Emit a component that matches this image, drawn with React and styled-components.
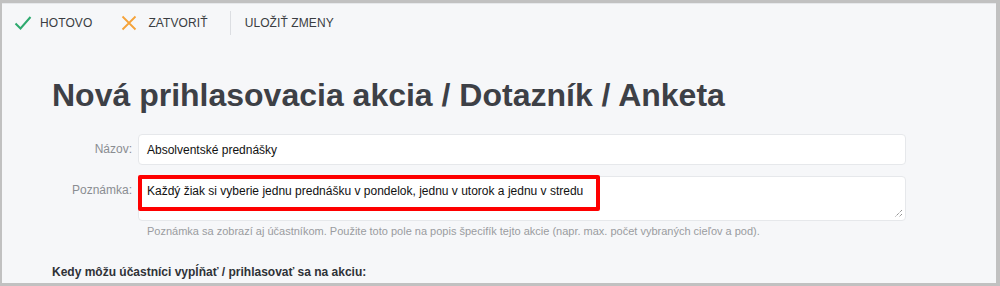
import React from "react";
import styled, { createGlobalStyle } from "styled-components";

const GlobalStyle = createGlobalStyle`
  html, body {
    margin: 0;
    padding: 0;
    background: #c1c1c1;
  }
  * {
    box-sizing: border-box;
  }
`;

const Frame = styled.div`
  width: 1000px;
  height: 286px;
  border-style: solid;
  border-color: #c1c1c1;
  border-width: 3px 4px 3px 2px;
  background: #f6f7f9;
  overflow: hidden;
  font-family: "Liberation Sans", Arial, sans-serif;
`;

const Toolbar = styled.div`
  display: flex;
  align-items: center;
  height: 38px;
  padding: 0 12px;
  border-top: 1px solid #e6e8eb;
`;

const ToolButton = styled.div`
  display: flex;
  align-items: center;
  gap: ${(p) => p.iconGap || "0"};
  margin-right: ${(p) => p.gap || "0"};
  font-size: 12px;
  color: #3a3d42;
  letter-spacing: 0.1px;
`;

const Divider = styled.div`
  width: 1px;
  height: 24px;
  background: #dcdee2;
  margin: 0 14px 0 0;
`;

const Content = styled.div`
  padding: 34px 0 0 50px;
`;

const Title = styled.h1`
  margin: 0 0 19px 0;
  font-size: 32px;
  font-weight: 700;
  color: #3d4046;
  line-height: 40px;
`;

const FormRow = styled.div`
  display: grid;
  grid-template-columns: 80px 768px;
  column-gap: 6px;
  margin-bottom: ${(p) => p.mb || "11px"};
`;

const Label = styled.label`
  text-align: right;
  font-size: 12px;
  color: #8a8d92;
  padding-top: ${(p) => p.pt || "8px"};
`;

const Field = styled.div`
  position: relative;
`;

const TextInput = styled.div`
  height: 31px;
  background: #fff;
  border: 1px solid #e6e8eb;
  border-radius: 4px;
  padding: 0 8px;
  display: flex;
  align-items: center;
  font-size: 12px;
  color: #111;
`;

const TextArea = styled.div`
  position: relative;
  height: 45px;
  background: #fff;
  border: 1px solid #e6e8eb;
  border-radius: 4px;
  padding: 7px 8px;
  font-size: 12px;
  color: #111;
`;

const Highlight = styled.div`
  position: absolute;
  left: 0;
  top: -1px;
  width: 462px;
  height: 36px;
  border: 4px solid #fe0000;
  border-radius: 2px;
  pointer-events: none;
`;

const Grip = styled.svg`
  position: absolute;
  right: 2px;
  bottom: 2px;
`;

const Hint = styled.div`
  margin-top: 4px;
  padding-left: 9px;
  font-size: 11px;
  color: #9a9ca0;
`;

const Section = styled.div`
  margin-top: 28px;
  font-size: 12px;
  font-weight: 700;
  color: #2f3237;
`;

const CheckIcon = () => (
  <svg width="18" height="16" viewBox="0 0 18 16">
    <path d="M1.5 8.5 L6.5 13.5 L16.5 2" fill="none" stroke="#2eaa6f" strokeWidth="2" />
  </svg>
);

const CloseIcon = () => (
  <svg width="16" height="16" viewBox="0 0 16 16">
    <path d="M1.5 1.5 L14.5 14.5 M14.5 1.5 L1.5 14.5" fill="none" stroke="#f5a33a" strokeWidth="1.8" />
  </svg>
);

const App = () => {
  return (
    <>
      <GlobalStyle />
      <Frame>
        <Toolbar>
          <ToolButton iconGap="8px" gap="29px">
            <CheckIcon />
            HOTOVO
          </ToolButton>
          <ToolButton iconGap="11px" gap="22px">
            <CloseIcon />
            ZATVORIŤ
          </ToolButton>
          <Divider />
          <ToolButton>ULOŽIŤ ZMENY</ToolButton>
        </Toolbar>
        <Content>
          <Title>Nová prihlasovacia akcia / Dotazník / Anketa</Title>
          <FormRow>
            <Label>Názov:</Label>
            <Field>
              <TextInput>Absolventské prednášky</TextInput>
            </Field>
          </FormRow>
          <FormRow mb="0">
            <Label pt="7px">Poznámka:</Label>
            <Field>
              <TextArea>
                Každý žiak si vyberie jednu prednášku v pondelok, jednu v utorok a jednu v stredu
                <Grip width="10" height="10" viewBox="0 0 10 10">
                  <path d="M9 2 L2 9 M9 6 L6 9" stroke="#666" strokeWidth="1" strokeDasharray="1 1" />
                </Grip>
              </TextArea>
              <Highlight />
              <Hint>
                Poznámka sa zobrazí aj účastníkom. Použite toto pole na popis špecifík tejto akcie (napr. max. počet vybraných cieľov a pod).
              </Hint>
            </Field>
          </FormRow>
          <Section>Kedy môžu účastníci vypĺňať / prihlasovať sa na akciu:</Section>
        </Content>
      </Frame>
    </>
  );
};

export default App;
